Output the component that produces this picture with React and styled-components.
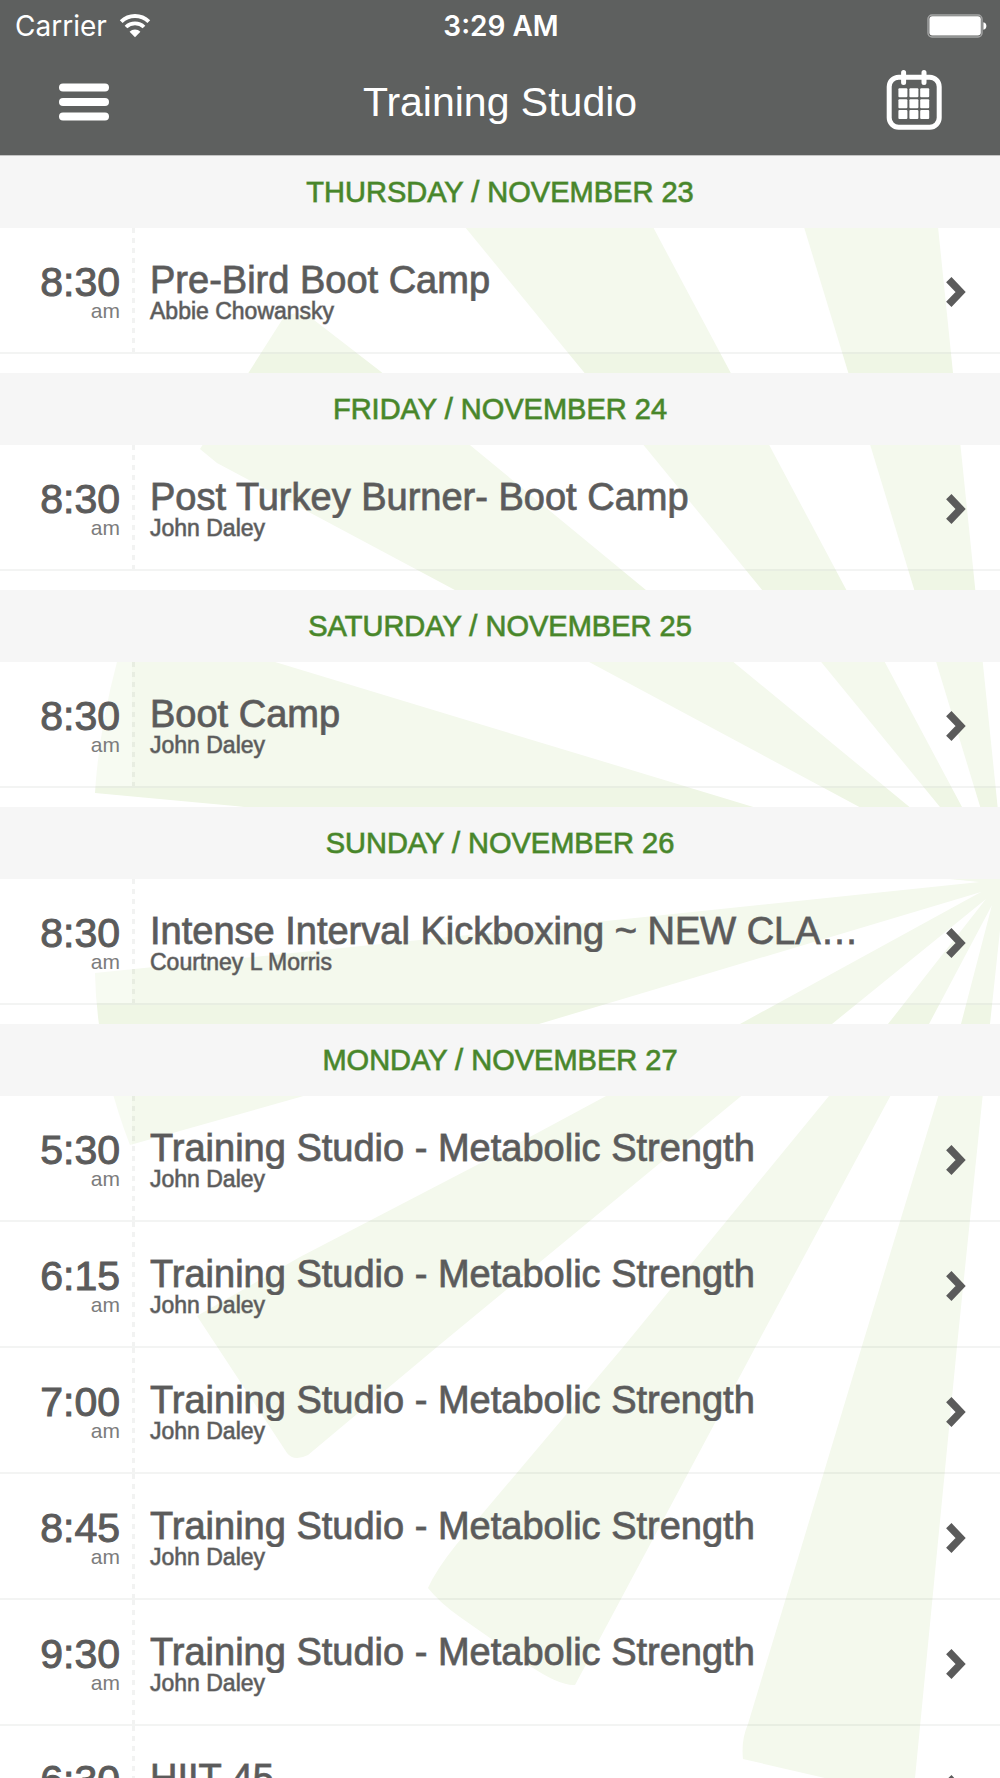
import React from "react";
import styled, { createGlobalStyle } from "styled-components";

const palette = {
  bar: "#5e605f",
  text: "#5b5b5b",
  green: "#48862a",
  band: "#f6f6f6",
  ray: "#eff6e5",
};

const GlobalStyle = createGlobalStyle`
  *{
    box-sizing:border-box;
  }
  body{
    margin:0;
    background:#fff;
    color:${palette.text};
    font-family:"Liberation Sans",Arial,sans-serif;
  }
  h1,h2,h3,p,ul{
    margin:0;
    padding:0;
    font-weight:400;
  }
`;

const Screen = styled.div`
  display:flex;
  flex-direction:column;
  height:100vh;
  overflow:hidden;
  position:relative;
`;

const AppHeader = styled.header`
  background:${palette.bar};
  border-bottom:1px solid #c4c4c4;
  color:#fff;
  flex:none;
  position:relative;
  z-index:1;
`;

const StatusBar = styled.div`
  display:grid;
  grid-template-columns:1fr auto 1fr;
  align-items:center;
  height:50px;
  padding:1px 13px 0 15px;
  font-family:Inter,"Liberation Sans",sans-serif;
  font-size:28px;
  line-height:32px;
`;

const Carrier = styled.div`
  display:flex;
  align-items:center;
  gap:12px;
`;

const Clock = styled.time`
  font-weight:600;
`;

const BatteryBox = styled.div`
  display:flex;
  justify-content:flex-end;
`;

const NavBar = styled.div`
  display:grid;
  grid-template-columns:1fr auto 1fr;
  align-items:center;
  height:105px;
  padding:0 58px 1px;
`;

const NavTitle = styled.h1`
  font-size:41px;
  line-height:48px;
`;

const IconButton = styled.button`
  display:flex;
  padding:0;
  border:0;
  background:none;
  color:inherit;
  cursor:pointer;
  justify-self:${({ $end }) => ($end ? "end" : "start")};
`;

const Schedule = styled.main`
  flex:1;
  min-height:0;
  overflow-y:auto;
  scrollbar-width:none;
  position:relative;
  z-index:1;
`;

const Rays = styled.svg`
  position:absolute;
  top:0;
  right:0;
  width:100%;
  height:auto;
`;

const Day = styled.section`
  padding-bottom:19px;
`;

const DayTitle = styled.h2`
  background:${palette.band};
  color:${palette.green};
  font-size:29px;
  line-height:72px;
  height:72px;
  text-align:center;
  text-transform:uppercase;
  -webkit-text-stroke:1px rgba(72,134,42,0.7);
`;

const ClassList = styled.ul`
  list-style:none;
`;

const ClassRow = styled.a`
  display:grid;
  grid-template-columns:132px 3px 1fr 20px;
  height:126px;
  padding-right:34px;
  border-bottom:2px solid rgba(90,100,90,0.07);
  background:rgba(255,255,255,0.3);
  color:inherit;
  text-decoration:none;
`;

const TimeCell = styled.div`
  padding:34px 12px 0 0;
  text-align:right;
  background:rgba(255,255,255,0.3);
`;

const Hour = styled.p`
  font-size:41px;
  line-height:40px;
  -webkit-text-stroke:1px ${palette.text};
`;

const Meridiem = styled.p`
  font-size:21px;
  line-height:18px;
  color:#7c7c7c;
`;

const Divider = styled.div`
  background:repeating-linear-gradient(
    to bottom,
    rgba(90,100,90,0.08) 0 5px,
    transparent 5px 10px
  );
`;

const ClassInfo = styled.div`
  min-width:0;
  padding:31px 16px 0 15px;
`;

const ClassName = styled.h3`
  font-size:38px;
  line-height:42px;
  white-space:nowrap;
  overflow:hidden;
  text-overflow:ellipsis;
  -webkit-text-stroke:1px rgba(91,91,91,0.8);
`;

const Trainer = styled.p`
  font-size:23px;
  line-height:20px;
  -webkit-text-stroke:1px rgba(91,91,91,0.6);
`;

const ChevronBox = styled.span`
  display:flex;
  align-items:center;
  padding-top:3px;
`;

const days = [
  {
    title: "Thursday / November 23",
    classes: [{ time: "8:30", name: "Pre-Bird Boot Camp", trainer: "Abbie Chowansky" }],
  },
  {
    title: "Friday / November 24",
    classes: [{ time: "8:30", name: "Post Turkey Burner- Boot Camp", trainer: "John Daley" }],
  },
  {
    title: "Saturday / November 25",
    classes: [{ time: "8:30", name: "Boot Camp", trainer: "John Daley" }],
  },
  {
    title: "Sunday / November 26",
    classes: [
      { time: "8:30", name: "Intense Interval Kickboxing ~ NEW CLA…", trainer: "Courtney L Morris" },
    ],
  },
  {
    title: "Monday / November 27",
    classes: [
      { time: "5:30", name: "Training Studio - Metabolic Strength", trainer: "John Daley" },
      { time: "6:15", name: "Training Studio - Metabolic Strength", trainer: "John Daley" },
      { time: "7:00", name: "Training Studio - Metabolic Strength", trainer: "John Daley" },
      { time: "8:45", name: "Training Studio - Metabolic Strength", trainer: "John Daley" },
      { time: "9:30", name: "Training Studio - Metabolic Strength", trainer: "John Daley" },
      { time: "6:30", name: "HIIT 45", trainer: "John Daley" },
    ],
  },
];

const WifiIcon = () => (
  <svg width="32" height="24" viewBox="0 0 32 24" fill="none" aria-hidden="true">
    <path d="M2.2 7.6a20 20 0 0 1 27.6 0" stroke="#fff" strokeWidth="4" />
    <path d="M7 13a13 13 0 0 1 18 0" stroke="#fff" strokeWidth="3.8" />
    <path d="M16 23.2l-5.4-5.4a7.4 7.4 0 0 1 10.8 0z" fill="#fff" />
  </svg>
);

const BatteryIcon = () => (
  <svg width="60" height="24" viewBox="0 0 60 24" aria-hidden="true">
    <rect x="1" y="1" width="54" height="22" rx="4" fill="none" stroke="#a4a5a5" strokeWidth="1.4" />
    <rect x="2.4" y="2.2" width="51.4" height="19.4" rx="3" fill="#fff" />
    <path d="M56.4 8.2c4 .6 4 7 0 7.6z" fill="#fff" />
  </svg>
);

const MenuIcon = () => (
  <svg width="52" height="38" viewBox="0 0 52 38" fill="#fff" aria-hidden="true">
    <rect x="1" y="0.5" width="50" height="8" rx="4" />
    <rect x="1" y="15" width="50" height="8" rx="4" />
    <rect x="1" y="29.5" width="50" height="8" rx="4" />
  </svg>
);

const CalendarIcon = () => (
  <svg width="56" height="64" viewBox="0 0 56 64" aria-hidden="true">
    <rect x="3.2" y="7.2" width="50" height="50" rx="9.5" fill="none" stroke="#fff" strokeWidth="5" />
    <path d="M17.6 2.6v10M38 2.6v10" stroke="#fff" strokeWidth="5" strokeLinecap="round" />
    {[18.3, 29.2, 40].map((y) =>
      [12.4, 23.4, 34.2].map((x) => (
        <rect key={`${x}-${y}`} x={x} y={y} width="9" height="9" rx="1" fill="#fff" />
      ))
    )}
  </svg>
);

const ChevronIcon = () => (
  <svg width="20" height="32" viewBox="0 0 20 32" fill="none" aria-hidden="true">
    <path d="M2.8 3.6L14.6 16 2.8 28.4" stroke={palette.text} strokeWidth="7.4" />
  </svg>
);

// sunburst behind the list
const Sunburst = () => (
  <Rays viewBox="0 0 1000 1778" fill={palette.ray} aria-hidden="true">
    <path d="M804 227L783 156H931L938 227L1000 830V872Z" />
    <path d="M465 227L407 156H615L653 227L1003 884Z" />
    <path d="M282 320Q298 306 314 320L380 371L1003 884L453 589L217 463L200 449Z" />
    <path d="M120 650L275 662L750 806L1003 884L235 806L95 793Q99 730 117 662Z" />
    <path d="M95 973L243 958L645 917L980 882L950 879H1000V930L990 1024L957 1346L915 1778H825L743 1759Q741 1740 748 1724L862 1346L938 1097L961 1024L992 905L929 1024L756 1346L575 1685Q560 1686 530 1666L460 1617Q440 1603 428 1588Q436 1570 456 1545L624 1346L888 1024L986 899L832 1024L740 1097L437 1347L308 1455Q294 1462 287 1453L197 1316L300 1257L500 1153L740 1024L981 892L539 1024L300 1097L130 1145Q97 1060 95 973Z" />
  </Rays>
);

const ClassItem = ({ time, name, trainer }) => {
  return (
    <li>
      <ClassRow href="#class">
        <TimeCell>
          <Hour>{time}</Hour>
          <Meridiem>am</Meridiem>
        </TimeCell>
        <Divider />
        <ClassInfo>
          <ClassName>{name}</ClassName>
          <Trainer>{trainer}</Trainer>
        </ClassInfo>
        <ChevronBox>
          <ChevronIcon />
        </ChevronBox>
      </ClassRow>
    </li>
  );
};

const App = () => {
  return (
    <>
      <GlobalStyle />
      <Screen>
        <Sunburst />
        <AppHeader>
          <StatusBar>
            <Carrier>
              Carrier
              <WifiIcon />
            </Carrier>
            <Clock>3:29 AM</Clock>
            <BatteryBox>
              <BatteryIcon />
            </BatteryBox>
          </StatusBar>
          <NavBar>
            <IconButton type="button" aria-label="Menu">
              <MenuIcon />
            </IconButton>
            <NavTitle>Training Studio</NavTitle>
            <IconButton type="button" aria-label="Calendar" $end>
              <CalendarIcon />
            </IconButton>
          </NavBar>
        </AppHeader>
        <Schedule>
          {days.map((day) => (
            <Day key={day.title}>
              <DayTitle>{day.title}</DayTitle>
              <ClassList>
                {day.classes.map((item) => (
                  <ClassItem key={item.time} {...item} />
                ))}
              </ClassList>
            </Day>
          ))}
        </Schedule>
      </Screen>
    </>
  );
};

export default App;
